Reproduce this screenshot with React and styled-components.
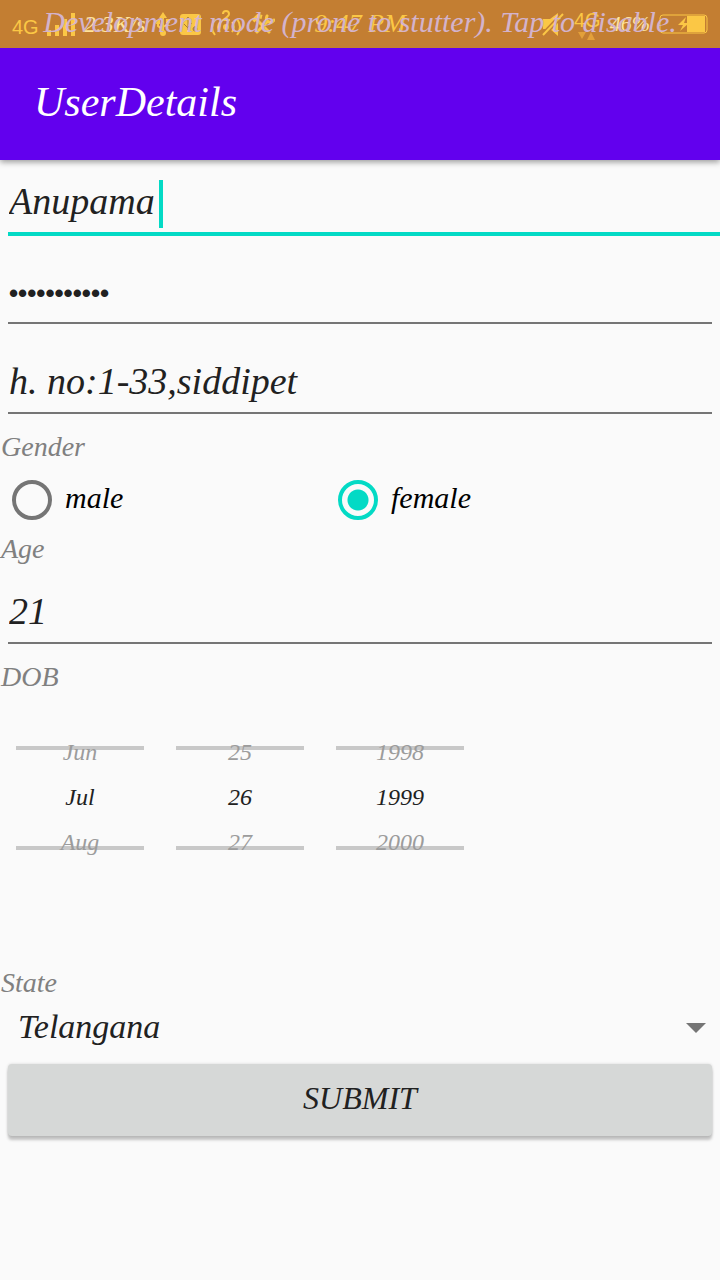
import React, { useState } from "react";
import styled, { createGlobalStyle } from "styled-components";

const script = `"Liberation Serif", serif`;
const sans = `"Liberation Sans", sans-serif`;
const amber = "#fbc745";
const accent = "#03dac5";

const GlobalStyle = createGlobalStyle`
  * { box-sizing: border-box; }
  body { margin: 0; background: #fafafa; }
  body, input, select, button { font-family: ${script}; font-style: italic; }
`;

const Screen = styled.div`
  min-height: 100vh;
  background: #fafafa;
  color: #212121;
`;

const StatusBar = styled.div`
  position: relative;
  height: 48px;
  background: #c37e32;
  color: ${amber};
  display: grid;
  grid-template-columns: 1fr auto 1fr;
  align-items: center;
  padding: 0 12px;
  white-space: nowrap;
  svg { display: block; flex: none; }
`;

const StatusGroup = styled.div`
  display: flex;
  align-items: center;
  gap: ${(p) => p.$gap}px;
  justify-content: ${(p) => (p.$end ? "flex-end" : "flex-start")};
`;

const Network = styled.span`
  font: normal 20px/24px ${sans};
  padding-top: ${(p) => (p.$raised ? 0 : 6)}px;
`;

const Info = styled.span`
  font-size: ${(p) => p.$size}px;
  line-height: 28px;
  color: ${(p) => (p.$light ? "#ffe39a" : amber)};
`;

const Stack = styled.span`
  display: flex;
  flex-direction: column;
  align-items: center;
`;

const DevNotice = styled.div`
  position: absolute;
  inset: 0;
  text-align: center;
  font-size: 30px;
  line-height: 44px;
  color: #d3b3cc;
  overflow: hidden;
`;

const AppBar = styled.header`
  height: 112px;
  display: flex;
  align-items: center;
  padding: 0 34px;
  background: #6200ee;
  box-shadow: 0 2px 6px rgba(0, 0, 0, 0.4);
`;

const Title = styled.h1`
  margin: 0;
  font-size: 42px;
  line-height: 44px;
  padding-bottom: 4px;
  font-weight: 400;
  color: #fff;
`;

const Form = styled.form`
  display: flex;
  flex-direction: column;
`;

const Field = styled.div`
  height: 90px;
  padding: 8px 8px 0;
  padding-right: ${(p) => (p.$focused ? 0 : 8)}px;
`;

const FieldBox = styled.div`
  display: flex;
  align-items: center;
  border-bottom: ${(p) => (p.$focused ? `4px solid ${accent}` : "2px solid #757575")};
`;

const TextInput = styled.input`
  height: 64px;
  padding: 2px 0 0 1px;
  border: 0;
  outline: 0;
  background: transparent;
  color: #212121;
  caret-color: transparent;
  font-size: 38px;
  ${(p) => (p.$hug ? "field-sizing: content; min-width: 1px;" : "width: 100%;")}
  &[type="password"] {
    font: normal bold 26px ${sans};
    padding-top: 6px;
  }
`;

const Caret = styled.span`
  width: 4px;
  height: 48px;
  margin: 8px 0 0 4px;
  background: ${accent};
`;

const Label = styled.label`
  display: block;
  height: 38px;
  font-size: 28px;
  line-height: 34px;
  padding-left: 1px;
  color: #808080;
`;

const RadioRow = styled.div`
  display: flex;
  height: 64px;
`;

const RadioLabel = styled.label`
  display: flex;
  align-items: center;
  gap: 13px;
  padding-left: 12px;
  width: ${(p) => p.$width}px;
  font-size: 30px;
  line-height: 40px;
  color: #000;
  span { padding-bottom: 4px; }
`;

const Radio = styled.input`
  appearance: none;
  margin: 0;
  width: 40px;
  height: 40px;
  border-radius: 50%;
  border: 4px solid #757575;
  &:checked {
    border-color: ${accent};
    background: radial-gradient(circle, ${accent} 10px, transparent 11px);
  }
`;

const DatePicker = styled.div`
  display: flex;
  gap: 32px;
  height: 268px;
  padding: 48px 16px 0;
`;

const Wheel = styled.div`
  position: relative;
  width: 128px;
  height: 104px;
  text-align: center;
  font-size: 24px;
  border-top: 4px solid #c8c8c8;
  border-bottom: 4px solid #c8c8c8;
`;

const WheelItems = styled.div`
  position: absolute;
  left: 0;
  right: 0;
  top: -20px;
`;

const WheelItem = styled.div`
  height: 45px;
  line-height: 45px;
  color: ${(p) => (p.$selected ? "#212121" : "#9c9c9c")};
`;

const Spinner = styled.div`
  display: flex;
  align-items: center;
  height: 48px;
  padding: 0 14px 0 18px;
`;

const Select = styled.select`
  flex: 1;
  appearance: none;
  height: 44px;
  margin-bottom: 4px;
  padding: 0;
  border: 0;
  outline: 0;
  background: transparent;
  color: #212121;
  font-size: 34px;
`;

const Submit = styled.button`
  height: 72px;
  margin: 12px 8px 0;
  padding: 0 0 4px;
  border: 0;
  border-radius: 4px;
  background: #d6d8d7;
  color: #212121;
  font-size: 32px;
  box-shadow: 0 4px 3px rgba(0, 0, 0, 0.22), 0 0 3px rgba(0, 0, 0, 0.15);
`;

const wheels = [
  ["Jun", "Jul", "Aug"],
  ["25", "26", "27"],
  ["1998", "1999", "2000"],
];

function Signal() {
  return (
    <svg width="29" height="23" viewBox="0 0 29 23" fill={amber}>
      <path d="M0 17h4v6H0zM8 12h4v11H8zM16 6h4v17h-4zM24 0h4v23h-4z" />
    </svg>
  );
}

function Usb() {
  return (
    <svg width="14" height="24" viewBox="0 0 14 24" fill="none" stroke={amber} strokeWidth="2">
      <path d="M7 4v16M7 18l-5-4V9M7 15l5-3V8" />
      <path d="M7 0l4 6H3z" fill={amber} stroke="none" />
      <path d="M0 8h4v4H0zM10 7h4v4h-4z" fill={amber} stroke="none" />
      <circle cx="7" cy="21" r="3" fill={amber} stroke="none" />
    </svg>
  );
}

function DebugBadge() {
  return (
    <svg width="21" height="21" viewBox="0 0 21 21">
      <rect width="21" height="21" rx="3" fill={amber} />
      <path d="M8 4v12M8 14l-4-4M8 13l4-4M6 6l2-3 2 3M15 12v4M13 15h4" stroke="#a87a35" strokeWidth="1" fill="none" />
      <circle cx="15" cy="15" r="2" fill="none" stroke="#a87a35" />
    </svg>
  );
}

function Hotspot() {
  return (
    <svg width="30" height="28" viewBox="0 0 30 28" fill="none" stroke={amber} strokeWidth="2">
      <path d="M4 9q-6 8 0 16M9 12q-4 5 0 10M26 9q6 8 0 16M21 12q4 5 0 10" />
      <path d="M12 4q0-3 3-3t3 3q0 2-6 6h7" />
      <circle cx="15" cy="17" r="2" fill={amber} />
    </svg>
  );
}

function Tools() {
  return (
    <svg width="24" height="20" viewBox="0 0 24 20" fill="none" stroke={amber} strokeLinecap="round">
      <path d="M7 7l11 11M16 8L6 18" strokeWidth="3" />
      <path d="M2 7l5-5 4 1" strokeWidth="4" strokeLinecap="butt" />
      <path d="M16 2q-2 5 2 6 3 1 5-2" strokeWidth="3" />
    </svg>
  );
}

function Mute() {
  return (
    <svg width="23" height="23" viewBox="0 0 23 23" fill={amber}>
      <path d="M1 6h7l8-6v23l-8-7H1z" />
      <path d="M1 22L21 1" stroke="#c37e32" strokeWidth="5" />
      <path d="M1 22L21 1" stroke={amber} strokeWidth="2" />
    </svg>
  );
}

function Battery() {
  return (
    <svg width="49" height="20" viewBox="0 0 49 20">
      <rect x="1" y="1" width="47" height="18" rx="3" fill="none" stroke={amber} strokeWidth="1" />
      <path d="M28 2h18v16H28z" fill={amber} />
      <path d="M27 3l-8 8h5l-3 6 9-8h-5z" fill={amber} />
    </svg>
  );
}

function Arrows() {
  return (
    <svg width="18" height="8" viewBox="0 0 18 8" fill="#e3a03b">
      <path d="M0 0h8L4 7zM9 8l4-8 4 8z" />
    </svg>
  );
}

function TextField({ type = "text", label, initial, focused }) {
  const [value, setValue] = useState(initial);
  return (
    <Field $focused={focused}>
      <FieldBox $focused={focused}>
        <TextInput
          type={type}
          aria-label={label}
          id={label}
          value={value}
          $hug={focused}
          onChange={(e) => setValue(e.target.value)}
        />
        {focused && <Caret />}
      </FieldBox>
    </Field>
  );
}

export default function App() {
  return (
    <Screen>
      <GlobalStyle />
      <StatusBar>
        <StatusGroup $gap={8}>
          <Network>4G</Network>
          <Signal />
          <StatusGroup $gap={10}>
            <Info $size={24} $light>2.3K/s</Info>
            <Usb />
            <DebugBadge />
            <Hotspot />
            <Tools />
          </StatusGroup>
        </StatusGroup>
        <Info $size={26}>9:47 PM</Info>
        <StatusGroup $gap={9} $end>
          <Mute />
          <Stack>
            <Network $raised>4G</Network>
            <Arrows />
          </Stack>
          <Info $size={22} $light>46%</Info>
          <Battery />
        </StatusGroup>
        <DevNotice>Development mode (prone to stutter). Tap to disable.</DevNotice>
      </StatusBar>
      <AppBar>
        <Title>UserDetails</Title>
      </AppBar>
      <Form onSubmit={(e) => e.preventDefault()}>
        <TextField label="Name" initial="Anupama" focused />
        <TextField label="Password" type="password" initial="anupama1234" />
        <TextField label="Address" initial="h. no:1-33,siddipet" />
        <Label as="div" id="gender">Gender</Label>
        <RadioRow role="radiogroup" aria-labelledby="gender">
          <RadioLabel $width={326}>
            <Radio type="radio" name="gender" value="male" />
            <span>male</span>
          </RadioLabel>
          <RadioLabel>
            <Radio type="radio" name="gender" value="female" defaultChecked />
            <span>female</span>
          </RadioLabel>
        </RadioRow>
        <Label htmlFor="Age">Age</Label>
        <TextField label="Age" initial="21" />
        <Label as="div">DOB</Label>
        <DatePicker>
          {wheels.map((items) => (
            <Wheel key={items[1]}>
              <WheelItems>
                {items.map((item, i) => (
                  <WheelItem key={item} $selected={i === 1}>{item}</WheelItem>
                ))}
              </WheelItems>
            </Wheel>
          ))}
        </DatePicker>
        <Label htmlFor="state">State</Label>
        <Spinner>
          <Select id="state" defaultValue="Telangana">
            <option>Telangana</option>
          </Select>
          <svg width="20" height="10" viewBox="0 0 20 10" fill="#757575">
            <path d="M0 0h20L10 10z" />
          </svg>
        </Spinner>
        <Submit type="submit">SUBMIT</Submit>
      </Form>
    </Screen>
  );
}
